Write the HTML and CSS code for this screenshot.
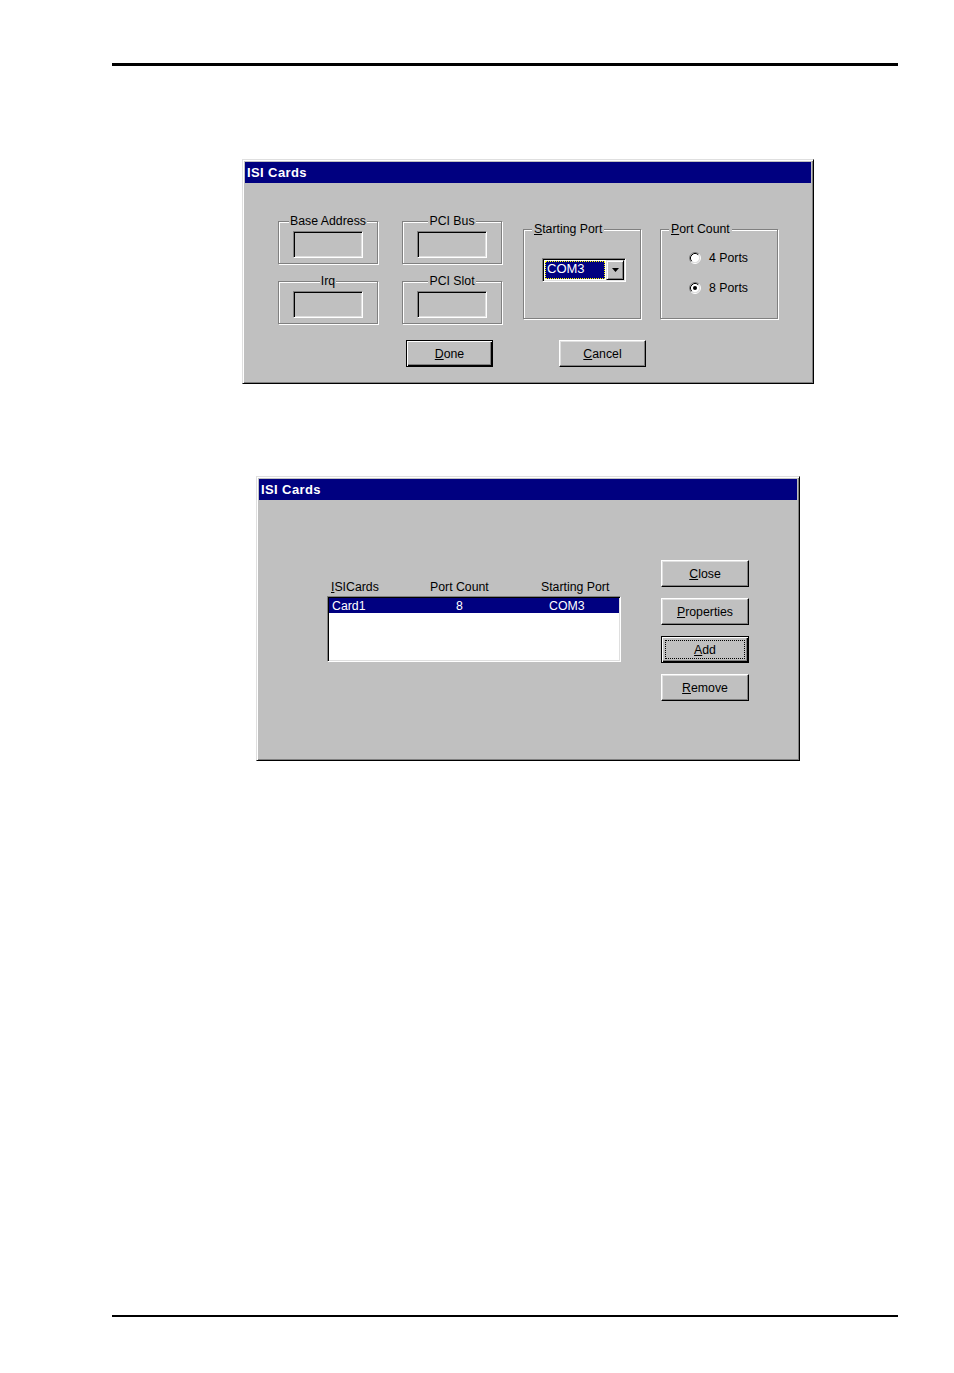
FILE: index.html
```html
<!DOCTYPE html>
<html>
<head>
<meta charset="utf-8">
<link rel="stylesheet" href="styles.css">
</head>
<body>
<div class="rule rule-top"></div>

<div class="window win1">
  <div class="titlebar">ISI Cards</div>
  <div class="client client1">
    <div class="top-row">
      <div class="quad">
        <fieldset class="group small"><legend class="centered">Base Address</legend><div class="field"></div></fieldset>
        <fieldset class="group small"><legend class="centered">PCI Bus</legend><div class="field"></div></fieldset>
        <fieldset class="group small"><legend class="centered">Irq</legend><div class="field"></div></fieldset>
        <fieldset class="group small"><legend class="centered">PCI Slot</legend><div class="field"></div></fieldset>
      </div>
      <fieldset class="group big start-port">
        <legend><u>S</u>tarting Port</legend>
        <div class="combo">
          <span class="combo-value">COM3</span>
          <span class="combo-btn"><svg width="7" height="4" viewBox="0 0 7 4"><polygon points="0,0 7,0 3.5,4" fill="#000"/></svg></span>
        </div>
      </fieldset>
      <fieldset class="group big port-count">
        <legend><u>P</u>ort Count</legend>
        <div class="radios">
          <div class="radio">
            <svg width="12" height="12" viewBox="0 0 12 12">
              <circle cx="6" cy="6" r="4.5" fill="#fff"/>
              <path d="M2.11 9.89 A5.5 5.5 0 0 1 9.89 2.11" fill="none" stroke="#808080"/>
              <path d="M9.89 2.11 A5.5 5.5 0 0 1 2.11 9.89" fill="none" stroke="#fff"/>
              <path d="M2.82 9.18 A4.5 4.5 0 0 1 9.18 2.82" fill="none" stroke="#000"/>
              <path d="M9.18 2.82 A4.5 4.5 0 0 1 2.82 9.18" fill="none" stroke="#dfdfdf"/>
            </svg>
            <span>4 Ports</span>
          </div>
          <div class="radio">
            <svg width="12" height="12" viewBox="0 0 12 12">
              <circle cx="6" cy="6" r="4.5" fill="#fff"/>
              <path d="M2.11 9.89 A5.5 5.5 0 0 1 9.89 2.11" fill="none" stroke="#808080"/>
              <path d="M9.89 2.11 A5.5 5.5 0 0 1 2.11 9.89" fill="none" stroke="#fff"/>
              <path d="M2.82 9.18 A4.5 4.5 0 0 1 9.18 2.82" fill="none" stroke="#000"/>
              <path d="M9.18 2.82 A4.5 4.5 0 0 1 2.82 9.18" fill="none" stroke="#dfdfdf"/>
              <circle cx="6" cy="6" r="2" fill="#000"/>
            </svg>
            <span>8 Ports</span>
          </div>
        </div>
      </fieldset>
    </div>
    <div class="btn-row">
      <div class="btn default"><span><u>D</u>one</span></div>
      <div class="btn"><span><u>C</u>ancel</span></div>
    </div>
  </div>
</div>

<div class="window win2">
  <div class="titlebar">ISI Cards</div>
  <div class="client client2">
    <div class="list-col">
      <div class="list-head">
        <span><u>I</u>SICards</span>
        <span>Port Count</span>
        <span>Starting Port</span>
      </div>
      <div class="listbox">
        <div class="list-row">
          <span>Card1</span>
          <span class="c2">8</span>
          <span class="c3">COM3</span>
        </div>
      </div>
    </div>
    <div class="btn-col">
      <div class="btn wide"><span><u>C</u>lose</span></div>
      <div class="btn wide"><span><u>P</u>roperties</span></div>
      <div class="btn wide default"><span class="focus"><u>A</u>dd</span></div>
      <div class="btn wide"><span><u>R</u>emove</span></div>
    </div>
  </div>
</div>

<div class="rule rule-bottom"></div>
</body>
</html>
```

FILE: styles.css
```css
html, body {
  margin: 0;
  padding: 0;
  background: #fff;
}
body {
  font-family: "Liberation Sans", Arial, sans-serif;
  font-size: 12.3px;
  color: #000;
  width: 954px;
}
.rule {
  width: 786px;
  margin-left: 112px;
  background: #000;
}
.rule-top {
  height: 3px;
  margin-top: 63px;
}
.rule-bottom {
  height: 2px;
  margin-top: 554px;
}

.window {
  box-sizing: border-box;
  background: #c0c0c0;
  border: 1px solid;
  border-color: #dfdfdf #000 #000 #dfdfdf;
  box-shadow: inset 1px 1px #fff, inset -1px -1px #808080;
  padding: 2px;
  display: flex;
  flex-direction: column;
}
.win1 {
  width: 572px;
  height: 225px;
  margin: 93px 0 0 242px;
}
.win2 {
  width: 544px;
  height: 285px;
  margin: 92px 0 0 256px;
}
.titlebar {
  height: 21px;
  line-height: 21px;
  background: #000080;
  color: #fff;
  font-weight: bold;
  font-size: 13px;
  letter-spacing: 0.4px;
  padding-left: 2px;
  flex: none;
}

/* dialog 1 */
.client1 {
  padding: 31px 0 0 33px;
}
.top-row {
  display: flex;
  align-items: flex-start;
}
.quad {
  display: grid;
  grid-template-columns: 100px 100px;
  grid-auto-rows: 50px;
  column-gap: 24px;
  row-gap: 10px;
}
.group {
  margin: 0;
  padding: 0;
  min-width: 0;
  box-sizing: border-box;
  border: 1px solid #808080;
  box-shadow: inset 1px 1px #fff, 1px 1px #fff;
}
.group legend {
  padding: 0 2px;
  margin-left: 8px;
  line-height: 14px;
  background: #c0c0c0;
}
.group legend.centered {
  margin: 0 auto;
  padding: 0 1px;
}
.small {
  height: 50px;
}
.field {
  width: 70px;
  height: 27px;
  box-sizing: border-box;
  margin: 3px auto 0;
  border: 1px solid;
  border-color: #808080 #fff #fff #808080;
  box-shadow: inset 1px 1px #000, inset -1px -1px #dfdfdf;
}
.big {
  width: 118px;
  height: 97px;
  margin-top: 8px;
}
.start-port {
  margin-left: 21px;
}
.port-count {
  margin-left: 19px;
}
.combo {
  width: 84px;
  height: 24px;
  box-sizing: border-box;
  margin: 22px 0 0 18px;
  padding: 1px;
  display: flex;
  background: #fff;
  border: 1px solid;
  border-color: #808080 #fff #fff #808080;
  box-shadow: inset 1px 1px #000, inset -1px -1px #dfdfdf;
}
.combo-value {
  flex: 1;
  margin: 1px;
  box-sizing: border-box;
  background: #000080;
  color: #fff;
  border: 1px dotted #ffff00;
  line-height: 14px;
  font-size: 13px;
  padding-left: 1px;
}
.combo-btn {
  width: 18px;
  flex: none;
  box-sizing: border-box;
  background: #c0c0c0;
  border: 1px solid;
  border-color: #dfdfdf #000 #000 #dfdfdf;
  box-shadow: inset 1px 1px #fff, inset -1px -1px #808080;
  display: flex;
  align-items: center;
  justify-content: center;
}
.combo-btn svg {
  display: block;
}
.radios {
  padding-left: 28px;
  margin-top: 14px;
  display: flex;
  flex-direction: column;
  gap: 14px;
}
.radio {
  height: 16px;
  display: flex;
  align-items: center;
  gap: 8px;
}
.radio svg {
  display: block;
  flex: none;
}
.btn-row {
  display: flex;
  gap: 66px;
  margin: 16px 0 0 128px;
}
.btn {
  width: 87px;
  height: 27px;
  box-sizing: border-box;
  display: flex;
  align-items: center;
  justify-content: center;
  background: #c0c0c0;
  border: 1px solid;
  border-color: #fff #000 #000 #fff;
  box-shadow: inset -1px -1px #808080, inset 1px 1px #dfdfdf;
}
.btn.default {
  border-color: #000;
  box-shadow: inset 1px 1px #fff, inset -1px -1px #000, inset -2px -2px #808080;
}
.btn.wide {
  width: 88px;
}
.btn .focus {
  align-self: stretch;
  flex: 1;
  margin: 3px;
  border: 1px dotted #000;
  display: flex;
  align-items: center;
  justify-content: center;
}

/* dialog 2 */
.client2 {
  display: flex;
  align-items: flex-start;
  padding-left: 68px;
}
.list-col {
  width: 294px;
  margin-top: 80px;
}
.list-head {
  display: grid;
  grid-template-columns: 99px 111px auto;
  padding-left: 4px;
  line-height: 14px;
  margin-bottom: 2px;
}
.listbox {
  height: 66px;
  box-sizing: border-box;
  padding: 1px;
  background: #fff;
  border: 1px solid;
  border-color: #808080 #fff #fff #808080;
  box-shadow: inset 1px 1px #000, inset -1px -1px #dfdfdf;
}
.list-row {
  display: grid;
  grid-template-columns: 98px 59px auto;
  padding-left: 3px;
  height: 15px;
  line-height: 16px;
  background: #000080;
  color: #fff;
}
.list-row .c2 {
  text-align: center;
}
.list-row .c3 {
  padding-left: 60px;
}
.btn-col {
  display: flex;
  flex-direction: column;
  gap: 11px;
  margin: 60px 0 0 40px;
}
```
